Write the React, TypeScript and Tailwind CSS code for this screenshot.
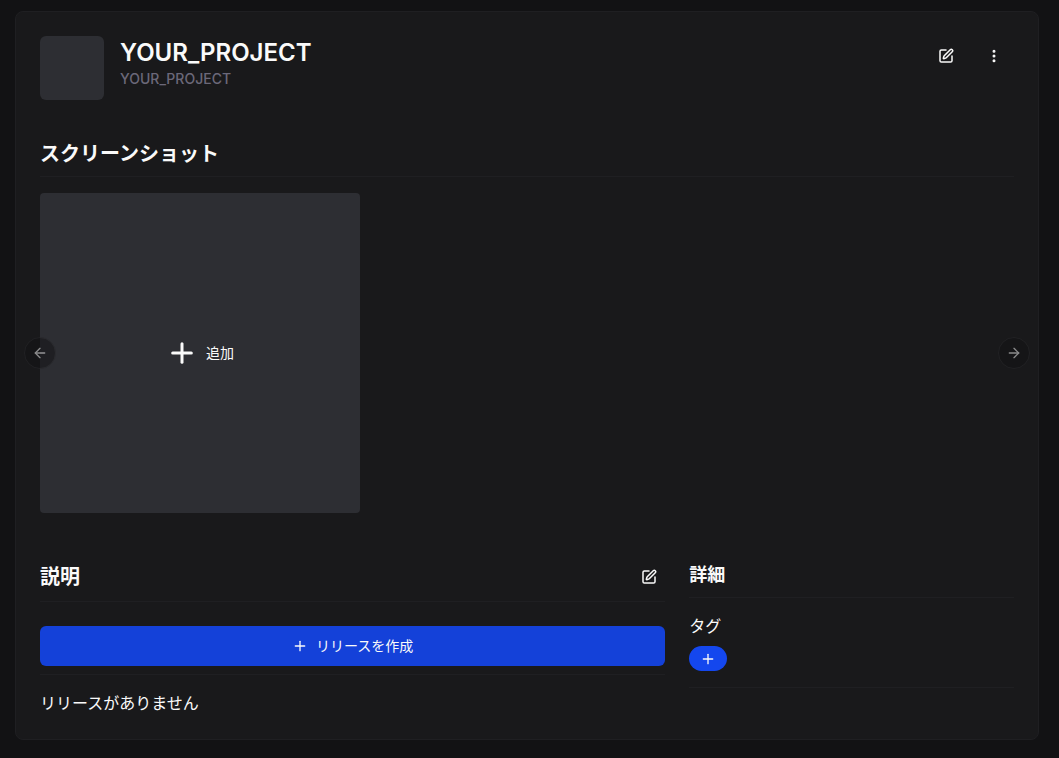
import { ArrowLeft, ArrowRight, EllipsisVertical, Plus, SquarePen } from "lucide-react";

const iconButton =
  "flex shrink-0 items-center justify-center rounded-md text-zinc-50 hover:bg-zinc-800";
const arrowButton =
  "absolute top-1/2 flex size-8 -translate-y-1/2 items-center justify-center rounded-full border border-[#29292c] bg-[#121214] text-zinc-50 opacity-50";

export default function App() {
  return (
    <div className="min-h-screen bg-[#121214] pt-[11px] pr-5 pb-[18px] pl-[15px] font-['Inter','Noto_Sans_CJK_JP',sans-serif] text-base text-zinc-50 antialiased">
      <main className="rounded-lg border border-[#1f1f22] bg-[#19191b] p-6">
        <header className="flex items-start gap-2">
          <div className="mr-2 size-16 shrink-0 rounded-md bg-[#2d2e33]" />
          <div className="min-w-0 flex-1 pt-px">
            <h1 className="text-2xl font-semibold">YOUR_PROJECT</h1>
            <p className="text-sm font-medium text-[#6b6879]">YOUR_PROJECT</p>
          </div>
          <button type="button" aria-label="編集" className={`${iconButton} size-10`}>
            <SquarePen className="size-4" strokeWidth={2.25} />
          </button>
          <button type="button" aria-label="メニュー" className={`${iconButton} size-10`}>
            <EllipsisVertical className="size-4" strokeWidth={2.5} />
          </button>
        </header>

        <section className="mt-10">
          <h2 className="border-b border-[#1f1f22] pb-2 text-xl font-semibold">
            スクリーンショット
          </h2>
          <div className="relative mt-4">
            <button
              type="button"
              className="flex size-80 items-center justify-center gap-2 rounded-sm bg-[#2d2e33] text-sm"
            >
              <Plus className="size-8" strokeWidth={2.25} />
              追加
            </button>
            <button type="button" disabled aria-label="前へ" className={`${arrowButton} -left-4`}>
              <ArrowLeft className="size-4" />
            </button>
            <button type="button" disabled aria-label="次へ" className={`${arrowButton} -right-4`}>
              <ArrowRight className="size-4" />
            </button>
          </div>
        </section>

        <div className="mt-12 flex items-start gap-6">
          <div className="min-w-0 flex-1">
            <div className="flex items-center justify-between border-b border-[#1f1f22] pb-2">
              <h2 className="text-xl font-semibold">説明</h2>
              <button type="button" aria-label="説明を編集" className={`${iconButton} size-8`}>
                <SquarePen className="size-4" strokeWidth={2.25} />
              </button>
            </div>
            <div className="mt-6 border-b border-[#1f1f22] pb-2">
              <button
                type="button"
                className="flex h-10 w-full items-center justify-center gap-2 rounded-md bg-[#1441d9] text-sm"
              >
                <Plus className="size-4" />
                リリースを作成
              </button>
            </div>
            <p className="mt-4">リリースがありません</p>
          </div>

          <aside className="w-1/3 shrink-0">
            <h2 className="border-b border-[#1f1f22] pb-2 text-lg font-semibold">詳細</h2>
            <div className="mt-4 border-b border-[#1f1f22] pb-4">
              <h3>タグ</h3>
              <button
                type="button"
                aria-label="タグを追加"
                className="mt-2 flex h-[25px] items-center rounded-full bg-[#1447ee] px-[11px]"
              >
                <Plus className="size-4" />
              </button>
            </div>
          </aside>
        </div>
      </main>
    </div>
  );
}
